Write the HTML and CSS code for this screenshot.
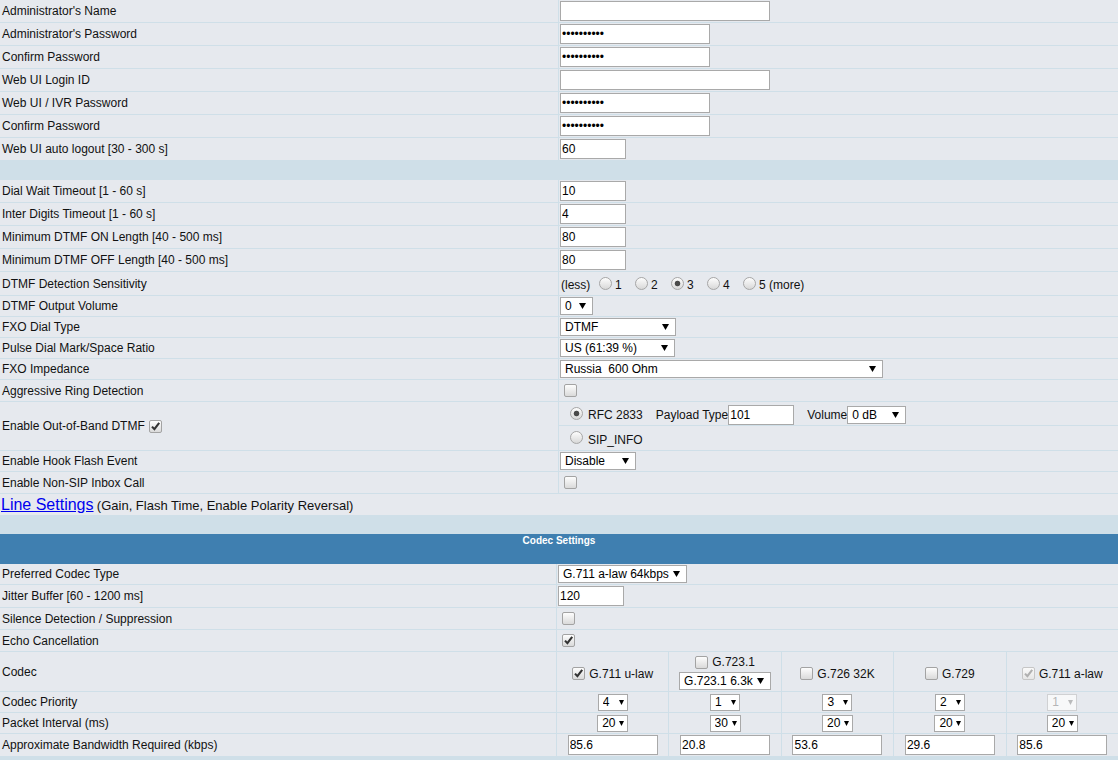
FILE: index.html
```html
<!DOCTYPE html>
<html>
<head>
<meta charset="utf-8">
<title>FXO Settings</title>
<link rel="stylesheet" href="styles.css">
</head>
<body>
<div class="page">
  <div class="row h23"><div class="lbl">Administrator's Name</div><div class="val"><input class="in w210" type="text" value=""></div></div>
  <div class="row h23"><div class="lbl">Administrator's Password</div><div class="val"><input class="in w150" type="password" value="abcdefghij"></div></div>
  <div class="row h23"><div class="lbl">Confirm Password</div><div class="val"><input class="in w150" type="password" value="abcdefghij"></div></div>
  <div class="row h23"><div class="lbl">Web UI Login ID</div><div class="val"><input class="in w210" type="text" value=""></div></div>
  <div class="row h23"><div class="lbl">Web UI / IVR Password</div><div class="val"><input class="in w150" type="password" value="abcdefghij"></div></div>
  <div class="row h23"><div class="lbl">Confirm Password</div><div class="val"><input class="in w150" type="password" value="abcdefghij"></div></div>
  <div class="row h23"><div class="lbl">Web UI auto logout [30 - 300 s]</div><div class="val"><input class="in w66" type="text" value="60"></div></div>
  <div class="sep"></div>
  <div class="row h23"><div class="lbl">Dial Wait Timeout [1 - 60 s]</div><div class="val"><input class="in w66" type="text" value="10"></div></div>
  <div class="row h23"><div class="lbl">Inter Digits Timeout [1 - 60 s]</div><div class="val"><input class="in w66" type="text" value="4"></div></div>
  <div class="row h23"><div class="lbl">Minimum DTMF ON Length [40 - 500 ms]</div><div class="val"><input class="in w66" type="text" value="80"></div></div>
  <div class="row h23"><div class="lbl">Minimum DTMF OFF Length [40 - 500 ms]</div><div class="val"><input class="in w66" type="text" value="80"></div></div>
  <div class="row h24"><div class="lbl">DTMF Detection Sensitivity</div>
    <div class="val sens">
      <span class="pre">(less)</span>
      <label class="opt"><input class="rd" type="radio" name="sens">1</label>
      <label class="opt"><input class="rd" type="radio" name="sens">2</label>
      <label class="opt"><input class="rd" type="radio" name="sens" checked>3</label>
      <label class="opt"><input class="rd" type="radio" name="sens">4</label>
      <label class="opt"><input class="rd" type="radio" name="sens">5 (more)</label>
    </div>
  </div>
  <div class="row h21"><div class="lbl">DTMF Output Volume</div><div class="val"><select class="sel w33"><option>0</option></select></div></div>
  <div class="row h21"><div class="lbl">FXO Dial Type</div><div class="val"><select class="sel w116"><option>DTMF</option></select></div></div>
  <div class="row h21"><div class="lbl">Pulse Dial Mark/Space Ratio</div><div class="val"><select class="sel w115"><option>US (61:39 %)</option></select></div></div>
  <div class="row h21"><div class="lbl">FXO Impedance</div><div class="val"><select class="sel w323"><option>Russia&nbsp; 600 Ohm</option></select></div></div>
  <div class="row h22"><div class="lbl">Aggressive Ring Detection</div><div class="val"><input class="cb" type="checkbox"></div></div>
  <div class="row h49"><div class="lbl">Enable Out-of-Band DTMF <input class="cb cb-lbl" type="checkbox" checked></div>
    <div class="val nest">
      <div class="sub sub1">
        <label class="rfc"><input class="rd rd-n" type="radio" name="oob" checked>RFC 2833</label>
        <span class="pt">Payload Type</span><input class="in w66" type="text" value="101">
        <span class="vol">Volume</span><select class="sel w59"><option>0 dB</option></select>
      </div>
      <div class="sub sub2">
        <label class="rfc"><input class="rd rd-n" type="radio" name="oob">SIP_INFO</label>
      </div>
    </div>
  </div>
  <div class="row h21"><div class="lbl">Enable Hook Flash Event</div><div class="val"><select class="sel w76"><option>Disable</option></select></div></div>
  <div class="row h22"><div class="lbl">Enable Non-SIP Inbox Call</div><div class="val"><input class="cb" type="checkbox"></div></div>
  <div class="full"><a class="lnk" href="#">Line Settings</a>&nbsp;<span class="note">(Gain, Flash Time, Enable Polarity Reversal)</span></div>
  <div class="sep"></div>
  <div class="head">Codec Settings</div>

  <div class="crow h21"><div class="lbl">Preferred Codec Type</div><div class="val"><select class="sel w129"><option>G.711 a-law 64kbps</option></select></div></div>
  <div class="crow h23"><div class="lbl">Jitter Buffer [60 - 1200 ms]</div><div class="val"><input class="in w66" type="text" value="120"></div></div>
  <div class="crow h22"><div class="lbl">Silence Detection / Suppression</div><div class="val"><input class="cb" type="checkbox"></div></div>
  <div class="crow h22"><div class="lbl">Echo Cancellation</div><div class="val"><input class="cb" type="checkbox" checked></div></div>

  <div class="grow h40"><div class="lbl">Codec</div>
    <div class="cc cod"><label><input class="cb cb-c" type="checkbox" checked>G.711 u-law</label></div>
    <div class="cc cod stack"><label><input class="cb cb-c" type="checkbox">G.723.1</label><select class="sel w92"><option>G.723.1 6.3k</option></select></div>
    <div class="cc cod"><label><input class="cb cb-c" type="checkbox">G.726 32K</label></div>
    <div class="cc cod"><label><input class="cb cb-c" type="checkbox">G.729</label></div>
    <div class="cc cod"><label class="dis"><input class="cb cb-c" type="checkbox" checked disabled>G.711 a-law</label></div>
  </div>
  <div class="grow h21"><div class="lbl">Codec Priority</div>
    <div class="cc"><select class="sel sm w30"><option>4</option></select></div>
    <div class="cc"><select class="sel sm w30"><option>1</option></select></div>
    <div class="cc"><select class="sel sm w30"><option>3</option></select></div>
    <div class="cc"><select class="sel sm w30"><option>2</option></select></div>
    <div class="cc"><select class="sel sm w30" disabled><option>1</option></select></div>
  </div>
  <div class="grow h21"><div class="lbl">Packet Interval (ms)</div>
    <div class="cc"><select class="sel sm w31"><option>20</option></select></div>
    <div class="cc"><select class="sel sm w31"><option>30</option></select></div>
    <div class="cc"><select class="sel sm w31"><option>20</option></select></div>
    <div class="cc"><select class="sel sm w31"><option>20</option></select></div>
    <div class="cc"><select class="sel sm w31"><option>20</option></select></div>
  </div>
  <div class="grow h23"><div class="lbl">Approximate Bandwidth Required (kbps)</div>
    <div class="cc"><input class="in w90" type="text" value="85.6"></div>
    <div class="cc"><input class="in w90" type="text" value="20.8"></div>
    <div class="cc"><input class="in w90" type="text" value="53.6"></div>
    <div class="cc"><input class="in w90" type="text" value="29.6"></div>
    <div class="cc"><input class="in w90" type="text" value="85.6"></div>
  </div>
</div>
</body>
</html>
```
FILE: styles.css
```css
:root {
  --bg: #e6e9ee;
  --line: #cfdfe8;
  --blue: #3f7fb0;
}
html, body {
  margin: 0;
  padding: 0;
}
body {
  background: var(--line);
  font: 12px "Liberation Sans", Arial, sans-serif;
  color: #111;
}
.page {
  width: 1118px;
}
.row, .crow, .grow {
  display: grid;
  column-gap: 1px;
  background: var(--line);
  padding-bottom: 1px;
  box-sizing: border-box;
}
.row { grid-template-columns: 558px 1fr; }
.crow { grid-template-columns: 556px 1fr; }
.grow { grid-template-columns: 556px repeat(5, 1fr); }

.h21 { height: 21px; }
.h22 { height: 22px; }
.h23 { height: 23px; }
.h24 { height: 24px; }
.h40 { height: 40px; }
.h49 { height: 49px; }

.row > div, .crow > div, .grow > div {
  background: var(--bg);
  display: flex;
  align-items: center;
  min-width: 0;
  white-space: nowrap;
}
.lbl { padding-left: 2px; }
.val { padding-left: 1px; }

.sep { height: 19px; background: var(--line); }

.full {
  height: 21px;
  background: var(--bg);
  display: flex;
  align-items: baseline;
  padding-left: 1px;
  line-height: 21px;
}
.lnk {
  font-size: 16px;
  color: #0000ee;
  text-decoration: underline;
}
.note { font-size: 13px; }

.head {
  height: 30px;
  box-sizing: border-box;
  background: var(--blue);
  color: #fff;
  font-weight: bold;
  font-size: 10px;
  line-height: 12px;
  text-align: center;
  padding-top: 1px;
}

/* text inputs */
.in {
  box-sizing: border-box;
  height: 20px;
  margin: 0;
  padding: 0 1px;
  border: 1px solid #a9a9a9;
  background: #fff;
  font: 12px "Liberation Sans", Arial, sans-serif;
  color: #000;
  outline: none;
}
.w30 { width: 30px; }
.w31 { width: 31px; }
.w33 { width: 33px; }
.w59 { width: 59px; }
.w66 { width: 66px; }
.w76 { width: 76px; }
.w90 { width: 90px; }
.w92 { width: 92px; }
.w115 { width: 115px; }
.w116 { width: 116px; }
.w129 { width: 129px; }
.w150 { width: 150px; }
.w210 { width: 210px; }
.w323 { width: 323px; }

/* selects */
.sel {
  -webkit-appearance: none;
  appearance: none;
  box-sizing: border-box;
  height: 18px;
  margin: 0;
  padding: 0 0 0 4px;
  border: 1px solid #a9a9a9;
  border-radius: 0;
  font: 12px "Liberation Sans", Arial, sans-serif;
  color: #000;
  background: #fff url("data:image/svg+xml,%3Csvg xmlns='http://www.w3.org/2000/svg' width='8' height='6'%3E%3Cpath d='M0 0H8L4 6z' fill='%23000'/%3E%3C/svg%3E") no-repeat right 6px center;
  background-size: 7px 6px;
  outline: none;
}
.sel.sm {
  height: 17px;
  background-size: 5px 5px;
  background-position: right 3px center;
}
.sel:disabled {
  color: #a0a0a0;
  border-color: #c8c8c8;
  background-image: url("data:image/svg+xml,%3Csvg xmlns='http://www.w3.org/2000/svg' width='8' height='6'%3E%3Cpath d='M0 0H8L4 6z' fill='%23a8a8a8'/%3E%3C/svg%3E");
}

/* checkboxes */
.cb {
  -webkit-appearance: none;
  appearance: none;
  box-sizing: border-box;
  width: 13px;
  height: 13px;
  margin: 0 0 0 4px;
  border: 1px solid #a3a3a3;
  border-radius: 2px;
  background: linear-gradient(#fdfdfd, #dadada);
  flex: none;
}
.cb:checked {
  background-image: url("data:image/svg+xml,%3Csvg xmlns='http://www.w3.org/2000/svg' width='11' height='11'%3E%3Cpath d='M2 5.6L4.4 8.2L9.2 1.8' fill='none' stroke='%23333' stroke-width='2.1'/%3E%3C/svg%3E"), linear-gradient(#fdfdfd, #dadada);
  background-repeat: no-repeat;
  background-position: center;
}
.cb:disabled {
  border-color: #c6c6c6;
  background-image: url("data:image/svg+xml,%3Csvg xmlns='http://www.w3.org/2000/svg' width='11' height='11'%3E%3Cpath d='M2 5.6L4.4 8.2L9.2 1.8' fill='none' stroke='%23b0b0b0' stroke-width='2.1'/%3E%3C/svg%3E"), linear-gradient(#fafafa, #e6e6e6);
}
.cb-lbl { margin-left: 4px; }

/* radios */
.rd {
  -webkit-appearance: none;
  appearance: none;
  box-sizing: border-box;
  width: 13px;
  height: 13px;
  margin: 0 3px 0 0;
  border: 1px solid #a6a6a6;
  border-radius: 50%;
  background: linear-gradient(#fdfdfd, #d8d8d8);
  flex: none;
}
.rd:checked {
  background: radial-gradient(circle, #4a4a4a 0 2.4px, rgba(74,74,74,0) 3.2px), linear-gradient(#fdfdfd, #d8d8d8);
}

/* sensitivity radios */
.sens { padding-top: 2px; box-sizing: border-box; }
.sens .pre { width: 38px; margin-left: 1px; }
.sens .opt {
  display: flex;
  align-items: center;
  width: 36px;
}
.sens .opt:last-child { width: auto; }
.sens .rd { margin-top: -3px; }

/* out of band nested */
.row > .val.nest {
  flex-direction: column;
  align-items: stretch;
  background: var(--line);
  padding: 0;
  gap: 1px;
}
.sub {
  background: var(--bg);
  display: flex;
  align-items: center;
  padding-left: 11px;
  box-sizing: border-box;
}
.sub1 { height: 23px; padding-top: 3px; }
.sub2 { height: 24px; padding-top: 3px; }
.rfc { display: flex; align-items: center; }
.rd-n { margin-right: 5px; margin-top: -4px; }
.pt { margin-left: 13px; }
.vol { margin-left: 13px; }

/* codec grid */
.cc { justify-content: center; }
.cod label {
  display: flex;
  align-items: center;
}
.cod { padding-top: 4px; box-sizing: border-box; }
.cb-c { margin: 0 4px 0 0; }
.cod.stack {
  flex-direction: column;
  justify-content: center;
  gap: 3px;
  padding-top: 2px;
}
.dis { color: #111; }
```
